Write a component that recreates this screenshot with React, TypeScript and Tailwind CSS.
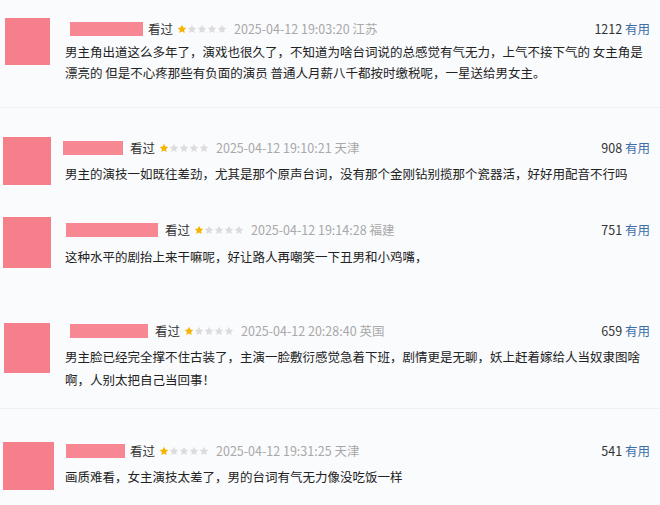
import React from 'react';

interface Review {
  id: number;
  wrap: string;
  avatar: string;
  nameBox: string;
  rowGap: string;
  textGap: string;
  count: string;
  date: string;
  place: string;
  text: string;
}

const reviews: Review[] = [
  {
    id: 1,
    wrap: 'pt-[18px] h-[108px] border-b border-[#eef0f4]',
    avatar: 'ml-[5px] w-[45px] h-[47px]',
    nameBox: 'ml-[5px] w-[73px] mr-[5px]',
    rowGap: 'mt-[1px]',
    textGap: 'mt-[2px] leading-[21px]',
    count: '1212',
    date: '2025-04-12 19:03:20',
    place: '江苏',
    text: '男主角出道这么多年了，演戏也很久了，不知道为啥台词说的总感觉有气无力，上气不接下气的 女主角是漂亮的 但是不心疼那些有负面的演员 普通人月薪八千都按时缴税呢，一星送给男女主。',
  },
  {
    id: 2,
    wrap: 'pt-[29px] h-[92px]',
    avatar: 'ml-[3px] w-[48px] h-[48px]',
    nameBox: 'ml-[-2px] w-[60px] mr-[7px]',
    rowGap: 'mt-[1px]',
    textGap: 'mt-[5px] leading-[21px]',
    count: '908',
    date: '2025-04-12 19:10:21',
    place: '天津',
    text: '男主的演技一如既往差劲，尤其是那个原声台词，没有那个金刚钻别揽那个瓷器活，好好用配音不行吗',
  },
  {
    id: 3,
    wrap: 'pt-[17px] h-[100px]',
    avatar: 'ml-[3px] w-[48px] h-[51px]',
    nameBox: 'ml-[1px] w-[92px] mr-[7px]',
    rowGap: 'mt-[3px]',
    textGap: 'mt-[6px] leading-[21px]',
    count: '751',
    date: '2025-04-12 19:14:28',
    place: '福建',
    text: '这种水平的剧抬上来干嘛呢，好让路人再嘲笑一下丑男和小鸡嘴，',
  },
  {
    id: 4,
    wrap: 'pt-[23px] h-[109px] border-b border-[#eef0f4]',
    avatar: 'ml-[4px] w-[46px] h-[50px]',
    nameBox: 'ml-[5px] w-[78px] mr-[7px]',
    rowGap: 'mt-[-2px]',
    textGap: 'mt-[4px] leading-[23px]',
    count: '659',
    date: '2025-04-12 20:28:40',
    place: '英国',
    text: '男主脸已经完全撑不住古装了，主演一脸敷衍感觉急着下班，剧情更是无聊，妖上赶着嫁给人当奴隶图啥啊，人别太把自己当回事！',
  },
  {
    id: 5,
    wrap: 'pt-[33px] h-[96px]',
    avatar: 'ml-[3px] w-[51px] h-[48px]',
    nameBox: 'ml-[1px] w-[59px] mr-[5px]',
    rowGap: 'mt-[-1px]',
    textGap: 'mt-[5px] leading-[21px]',
    count: '541',
    date: '2025-04-12 19:31:25',
    place: '天津',
    text: '画质难看，女主演技太差了，男的台词有气无力像没吃饭一样',
  },
];

const Star = ({ on }: { on: boolean }) => (
  <svg width="10" height="10" viewBox="0 0 24 24">
    <path
      d="M12 1.8l3.1 6.6 7.2.9-5.3 5 1.4 7.1L12 17.9l-6.4 3.5 1.4-7.1-5.3-5 7.2-.9z"
      fill={on ? '#f4b400' : '#dcdcdc'}
    />
  </svg>
);

export default function App() {
  return (
    <div className="w-[660px] h-[505px] overflow-hidden bg-[#fafbfd] text-[12.5px] text-[#222] font-['Noto_Sans_CJK_SC','Noto_Sans',sans-serif]">
      {reviews.map((r) => (
        <div key={r.id} className={r.wrap}>
          <div className="flex">
            <div className="w-[65px] shrink-0">
              <div className={`${r.avatar} bg-[#f57f8b]`} />
            </div>
            <div className="w-[585px]">
              <div className={`${r.rowGap} flex items-center h-[20px] leading-[20px]`}>
                <div className={`${r.nameBox} h-[14px] bg-[#f78893]`} />
                <span className="text-[#333]">看过</span>
                <span className="flex ml-[4px] mr-[7px]">
                  {[0, 1, 2, 3, 4].map((i) => (
                    <Star key={i} on={i === 0} />
                  ))}
                </span>
                <span className="text-[#a8a8a8]">
                  {r.date} {r.place}
                </span>
                <span className="ml-auto text-[#333]">
                  {r.count} <span className="text-[#3f6fa6]">有用</span>
                </span>
              </div>
              <p className={r.textGap}>{r.text}</p>
            </div>
          </div>
        </div>
      ))}
    </div>
  );
}
